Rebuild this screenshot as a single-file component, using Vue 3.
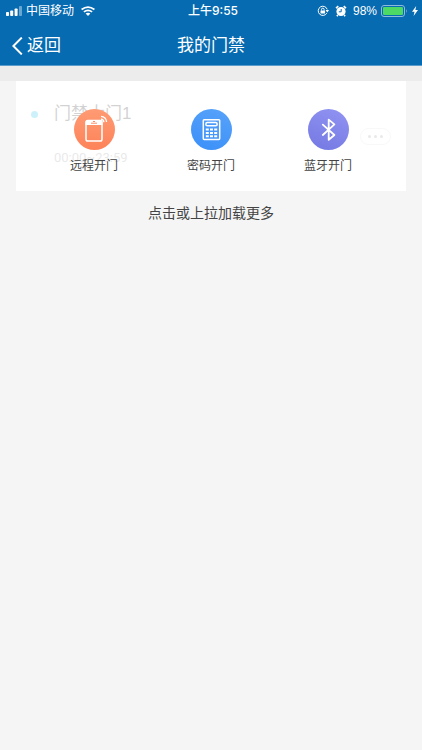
<template>
  <div class="page">
    <header class="top">
      <div class="status-bar">
        <div class="status-left">
          <svg class="signal" viewBox="0 0 17 10" aria-hidden="true">
            <rect x="0" y="6" width="3" height="4" rx="0.8" />
            <rect x="4.2" y="4.5" width="3" height="5.5" rx="0.8" />
            <rect x="8.6" y="2.5" width="3" height="7.5" rx="0.8" />
            <rect x="13" y="0" width="3" height="10" rx="0.8" opacity="0.4" />
          </svg>
          <span>中国移动</span>
          <svg class="wifi" viewBox="0 0 14 10" aria-hidden="true">
            <path d="M0.6 3.5 Q7 -1.4 13.4 3.5" />
            <path d="M2.9 5.9 Q7 2.8 11.1 5.9" />
            <path class="solid" d="M4.6 7.6 Q7 5.9 9.4 7.6 L7 10 Z" />
          </svg>
        </div>
        <div class="clock">上午9:55</div>
        <div class="status-right">
          <svg class="lock" viewBox="0 0 12 12" aria-hidden="true">
            <path d="M9.8 8.2 A4.6 4.6 0 1 1 10.2 4.4" />
            <path class="solid" d="M8.6 5 H12 L10.3 7.4 Z" />
            <rect class="solid" x="3.5" y="5.4" width="4.6" height="3.2" rx="0.4" />
            <path d="M4.5 5.5 V4.5 A1.3 1.3 0 0 1 7.1 4.5 V5.5" />
          </svg>
          <svg class="alarm" viewBox="0 0 12 12" aria-hidden="true">
            <circle class="solid" cx="6" cy="6.5" r="4.6" />
            <path class="ear" d="M1 3.1 L3.3 1.2 M11 3.1 L8.7 1.2" />
            <path class="ear" d="M2.8 10 L1.9 11.2 M9.2 10 L10.1 11.2" />
            <path class="hand" d="M6.2 4 V6.8 H3.8" />
          </svg>
          <span>98%</span>
          <svg class="battery" viewBox="0 0 27 12" aria-hidden="true">
            <rect class="shell" x="0.5" y="0.5" width="23" height="11" rx="2.5" />
            <rect class="level" x="2" y="2" width="20" height="8" rx="1.2" />
            <path class="tip" d="M25 4 Q26.5 6 25 8 Z" />
          </svg>
          <svg class="bolt" viewBox="0 0 6 10" aria-hidden="true">
            <path d="M4.2 0 L0 5.7 H2.5 L1.6 10 L6 4.1 H3.4 Z" />
          </svg>
        </div>
      </div>
      <nav class="nav-bar">
        <button type="button" class="back">
          <svg viewBox="0 0 11 18" aria-hidden="true">
            <path d="M9.8 0.6 L1.4 9 L9.8 17.4" />
          </svg>
          <span>返回</span>
        </button>
        <h1>我的门禁</h1>
      </nav>
    </header>

    <main>
      <section class="card">
        <div class="door">
          <span class="dot"></span>
          <div class="info">
            <h2>门禁大门1</h2>
            <p>00:00~23:59</p>
          </div>
          <button type="button" class="more" aria-label="更多">
            <i></i><i></i><i></i>
          </button>
        </div>

        <!-- 开门方式遮罩 -->
        <div class="mask">
          <button v-for="item in methods" :key="item.type" type="button" class="method">
            <span class="icon" :class="item.type">
              <svg v-if="item.type === 'remote'" viewBox="0 0 41 41" aria-hidden="true">
                <rect x="12" y="11.6" width="16" height="20.4" rx="1.8" />
                <path class="fill" d="M11.6 16 V13 Q11.6 11 13.6 11 H26.4 Q28.4 11 28.4 13 V16 Z" />
                <path class="detail" d="M17 14.2 H23 M19 12.5 H21" />
                <path class="wave" d="M27 10 Q29.6 10.4 29.9 13.2" />
                <path class="wave" d="M27 7.3 Q32.1 7.8 32.6 13" />
              </svg>
              <svg v-else-if="item.type === 'code'" viewBox="0 0 41 41" aria-hidden="true">
                <rect x="12.3" y="10.8" width="16.4" height="19.6" rx="0.8" />
                <rect x="14.9" y="13.6" width="11.2" height="3.2" rx="1.4" />
                <path
                  class="fill"
                  d="M14.8 19.6h3v2h-3z M19 19.6h3v2h-3z M23.2 19.6h3v2h-3z M14.8 22.9h3v2h-3z M19 22.9h3v2h-3z M23.2 22.9h3v2h-3z M14.8 26.2h3v2h-3z M19 26.2h3v2h-3z M23.2 26.2h3v2h-3z"
                />
              </svg>
              <svg v-else viewBox="0 0 41 41" aria-hidden="true">
                <path class="bt" d="M14.8 15.6 L26.4 26 L20.7 30.8 V10.6 L26.4 15.4 L14.8 26" />
              </svg>
            </span>
            <span class="label">{{ item.label }}</span>
          </button>
        </div>
      </section>

      <button type="button" class="load-more">点击或上拉加载更多</button>
    </main>
  </div>
</template>

<script setup>
import { ref } from 'vue'

const methods = ref([
  { type: 'remote', label: '远程开门' },
  { type: 'code', label: '密码开门' },
  { type: 'bluetooth', label: '蓝牙开门' }
])
</script>

<style>
body {
  margin: 0;
  background: #f5f5f5;
}
</style>

<style scoped>
.page {
  min-height: 100vh;
  background: #f5f5f5;
  color: #444;
  font-family: "Liberation Sans", "Noto Sans CJK SC", sans-serif;
}

button {
  padding: 0;
  border: none;
  background: none;
  color: inherit;
  font-family: inherit;
  cursor: pointer;
}

h1,
h2,
p {
  margin: 0;
  font-weight: 400;
}

svg {
  display: block;
  fill: none;
}

/* 顶部 */
.top {
  background: #066bb1;
  border-bottom: 1px solid #5a9dcd;
  color: #fff;
}

.status-bar {
  display: grid;
  grid-template-columns: 1fr auto 1fr;
  align-items: center;
  height: 22px;
  padding: 0 4px 0 6px;
  font-size: 12px;
  line-height: 22px;
}

.status-left,
.status-right {
  display: flex;
  align-items: center;
  gap: 4px;
}

.status-left {
  gap: 3px;
}

.status-right {
  justify-content: flex-end;
}

.clock {
  padding-left: 2px;
  font-family: Inter, "Noto Sans CJK SC", sans-serif;
  font-weight: 500;
}

.signal {
  width: 17px;
  height: 10px;
  fill: #fff;
}

.wifi {
  width: 14px;
  height: 10px;
  margin-left: 4px;
  stroke: #fff;
  stroke-width: 1.8;
}

.solid {
  fill: #fff;
  stroke: none;
}

.lock,
.alarm {
  width: 12px;
  height: 12px;
  stroke: #fff;
  stroke-width: 1;
}

.alarm {
  margin: 0 2px;
}

.ear {
  stroke-width: 1.6;
}

.hand {
  stroke: #066bb1;
}

.battery {
  width: 27px;
  height: 12px;
}

.shell {
  stroke: #8cbbdc;
}

.level {
  fill: #4cd964;
}

.tip {
  fill: #8cbbdc;
}

.bolt {
  width: 6px;
  height: 10px;
  fill: #fff;
}

.nav-bar {
  display: grid;
  grid-template-columns: 1fr auto 1fr;
  align-items: center;
  padding: 4px 12px 0;
}

.nav-bar h1 {
  font-size: 17px;
  line-height: 39px;
}

.back {
  display: flex;
  align-items: center;
  gap: 4px;
  font-size: 17px;
  line-height: 39px;
}

.back svg {
  width: 11px;
  height: 18px;
  stroke: #fff;
  stroke-width: 2;
}

/* 门禁卡片 */
main {
  border-top: 15px solid #ececec;
}

.card {
  position: relative;
  margin: 0 16px;
  background: #fff;
}

.door {
  display: flex;
  align-items: center;
  height: 110px;
  padding: 0 15px;
}

.dot {
  width: 7px;
  height: 7px;
  margin-bottom: 44px;
  border-radius: 50%;
  background: #1ebfe6;
}

.info {
  flex: 1;
  padding-left: 16px;
}

.info h2 {
  font-size: 17px;
  line-height: 28px;
  color: #333;
}

.info p {
  margin-top: 16px;
  font-family: Roboto, sans-serif;
  font-size: 13px;
  line-height: 28px;
  color: #999;
}

.more {
  display: flex;
  align-items: center;
  justify-content: center;
  gap: 3px;
  width: 31px;
  height: 17px;
  border: 1px solid #ddd;
  border-radius: 9px;
}

.more i {
  width: 3px;
  height: 3px;
  border-radius: 50%;
  background: #999;
}

.mask {
  position: absolute;
  inset: 0;
  display: flex;
  align-items: flex-start;
  padding: 28px 5% 0;
  background: rgba(255, 255, 255, 0.78);
}

.method {
  flex: 1;
  display: flex;
  flex-direction: column;
  align-items: center;
  gap: 6px;
}

.icon {
  width: 41px;
  height: 41px;
  border-radius: 50%;
}

.icon svg {
  width: 41px;
  height: 41px;
  stroke: #fff;
  stroke-width: 1.5;
}

.icon .fill {
  fill: #fff;
  stroke: none;
}

.icon .detail {
  stroke: #ff8a60;
  stroke-width: 1;
}

.icon .wave {
  stroke-width: 1.3;
}

.icon .bt {
  stroke-width: 1.8;
  stroke-linejoin: round;
  stroke-linecap: round;
}

.remote {
  background: linear-gradient(#ff9b73, #fd8259);
}

.code {
  background: linear-gradient(20deg, #3a8ff8, #58a3fa);
}

.bluetooth {
  background: linear-gradient(20deg, #7378e2, #9294f2);
}

.label {
  font-size: 12px;
  line-height: 20px;
  color: #444;
}

.load-more {
  display: block;
  width: 100%;
  margin-top: 10px;
  font-size: 14px;
  line-height: 24px;
  color: #444;
}
</style>
